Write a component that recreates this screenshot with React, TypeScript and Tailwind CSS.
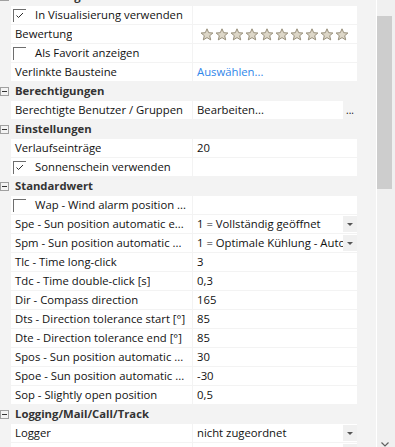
import React from 'react'

type Row =
  | { kind: 'header'; label: string }
  | { kind: 'text'; label: string; value?: string; link?: boolean }
  | { kind: 'check'; label: string; checked: boolean }
  | { kind: 'select'; label: string; value: string }
  | { kind: 'stars'; label: string }
  | { kind: 'edit'; label: string; value: string }

const rows: Row[] = [
  { kind: 'header', label: 'Darstellung' },
  { kind: 'check', label: 'In Visualisierung verwenden', checked: true },
  { kind: 'stars', label: 'Bewertung' },
  { kind: 'check', label: 'Als Favorit anzeigen', checked: false },
  { kind: 'text', label: 'Verlinkte Bausteine', value: 'Auswählen...', link: true },
  { kind: 'header', label: 'Berechtigungen' },
  { kind: 'edit', label: 'Berechtigte Benutzer / Gruppen', value: 'Bearbeiten...' },
  { kind: 'header', label: 'Einstellungen' },
  { kind: 'text', label: 'Verlaufseinträge', value: '20' },
  { kind: 'check', label: 'Sonnenschein verwenden', checked: true },
  { kind: 'header', label: 'Standardwert' },
  { kind: 'check', label: 'Wap - Wind alarm position ...', checked: false },
  { kind: 'select', label: 'Spe - Sun position automatic e...', value: '1 = Vollständig geöffnet' },
  { kind: 'select', label: 'Spm - Sun position automatic ...', value: '1 = Optimale Kühlung - Automatik' },
  { kind: 'text', label: 'Tlc - Time long-click', value: '3' },
  { kind: 'text', label: 'Tdc - Time double-click [s]', value: '0,3' },
  { kind: 'text', label: 'Dir - Compass direction', value: '165' },
  { kind: 'text', label: 'Dts - Direction tolerance start [°]', value: '85' },
  { kind: 'text', label: 'Dte - Direction tolerance end [°]', value: '85' },
  { kind: 'text', label: 'Spos - Sun position automatic ...', value: '30' },
  { kind: 'text', label: 'Spoe - Sun position automatic ...', value: '-30' },
  { kind: 'text', label: 'Sop - Slightly open position', value: '0,5' },
  { kind: 'header', label: 'Logging/Mail/Call/Track' },
  { kind: 'select', label: 'Logger', value: 'nicht zugeordnet' },
  { kind: 'select', label: 'Mail', value: 'nicht zugeordnet' },
]

function Star() {
  return (
    <svg width="14" height="13" viewBox="0 0 14 13">
      <path
        d="M7 0.8 L8.7 4.7 L12.9 5 L9.7 7.7 L10.7 11.9 L7 9.6 L3.3 11.9 L4.3 7.7 L1.1 5 L5.3 4.7 Z"
        fill="#ddd7c8"
        stroke="#978f7a"
        strokeWidth="1"
        strokeLinejoin="round"
      />
    </svg>
  )
}

function CheckBox({ checked }: { checked: boolean }) {
  return (
    <div className="h-[13px] w-[13px] shrink-0 border-l border-t border-[#6e6e6e]">
      {checked && (
        <svg width="12" height="12" viewBox="0 0 12 12">
          <polyline points="2.5,5.5 4.5,7.5 9,3" fill="none" stroke="#2b2b2b" strokeWidth="1" />
        </svg>
      )}
    </div>
  )
}

function DropButton() {
  return (
    <div className="flex h-[16px] w-[14px] shrink-0 items-center justify-center bg-[#f0f0f0]">
      <svg width="6" height="3" viewBox="0 0 6 3">
        <path d="M0 0 H6 L3 3 Z" fill="#555" />
      </svg>
    </div>
  )
}

function PropRow({ row }: { row: Row }) {
  if (row.kind === 'header') {
    return (
      <div className="flex h-[18px] items-center -ml-[11px]">
        <div className="flex h-[9px] w-[9px] items-center justify-center border border-[#a0a0a0]">
          <div className="h-px w-[5px] bg-[#333]" />
        </div>
        <span className="ml-[6px] font-bold text-[#333]">{row.label}</span>
      </div>
    )
  }

  let label: React.ReactNode = <span className="truncate pl-[4px]">{row.label}</span>
  if (row.kind === 'check') {
    label = (
      <div className="flex items-center pl-[2px]">
        <CheckBox checked={row.checked} />
        <span className="ml-[9px] whitespace-nowrap">{row.label}</span>
      </div>
    )
  }

  let value: React.ReactNode = null
  if (row.kind === 'text') {
    value = (
      <div className="flex h-[18px] w-[164px] items-center bg-white pl-[4px]">
        <span className={row.link ? 'text-[#2f86ea]' : ''}>{row.value}</span>
      </div>
    )
  } else if (row.kind === 'check') {
    value = <div className="h-[18px] w-[164px] bg-white" />
  } else if (row.kind === 'stars') {
    value = (
      <div className="flex h-[18px] w-[164px] items-center bg-white pl-[7px]">
        {Array.from({ length: 10 }).map((_, i) => (
          <div key={i} className="w-[15px]">
            <Star />
          </div>
        ))}
      </div>
    )
  } else if (row.kind === 'select') {
    value = (
      <div className="flex h-[18px] w-[164px] items-center bg-white pl-[4px]">
        <span className="flex-1 overflow-hidden whitespace-nowrap">{row.value}</span>
        <DropButton />
      </div>
    )
  } else if (row.kind === 'edit') {
    value = (
      <div className="flex h-[18px] w-[164px] items-center">
        <div className="flex h-[18px] w-[150px] items-center bg-white pl-[4px]">{row.value}</div>
        <span className="ml-[3px] text-[10px] leading-none">...</span>
      </div>
    )
  }

  return (
    <div className="flex h-[18px] gap-px">
      <div className="flex h-[18px] w-[181px] items-center overflow-hidden bg-white">{label}</div>
      {value}
    </div>
  )
}

export default function App() {
  return (
    <div className="flex h-[447px] w-[395px] overflow-hidden bg-[#f3f3f3] font-['Open_Sans',sans-serif] text-[11.3px] leading-[18px] text-[#111]">
      <div className="-mt-[13px] flex w-[376px] flex-col gap-px pl-[11px]">
        {rows.map((r, i) => (
          <PropRow key={i} row={r} />
        ))}
      </div>
      <div className="w-px bg-white" />
      <div className="flex w-[18px] flex-col bg-[#f0f0f0]">
        <div className="mt-[16px] h-[174px] w-[15px] bg-[#cdcdcd]" />
        <div className="mt-[253px] flex justify-center pr-[3px]">
          <svg width="8" height="5" viewBox="0 0 8 5">
            <polyline points="0.5,0.5 4,4 7.5,0.5" fill="none" stroke="#606060" strokeWidth="1.2" />
          </svg>
        </div>
      </div>
    </div>
  )
}
